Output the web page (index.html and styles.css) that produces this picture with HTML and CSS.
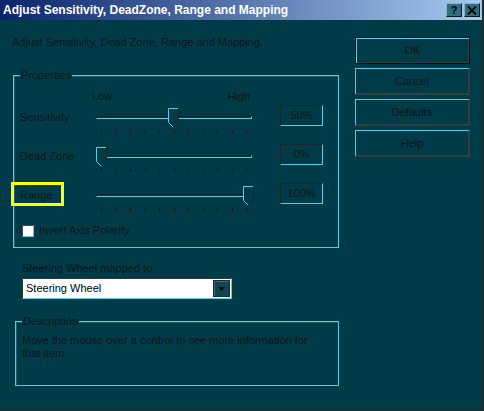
FILE: index.html
```html
<!DOCTYPE html>
<html>
<head>
<meta charset="utf-8">
<link rel="stylesheet" href="styles.css">
</head>
<body>
<div class="window">
  <div class="titlebar">
    <span class="title">Adjust Sensitivity, DeadZone, Range and Mapping</span>
    <div class="tb-btns">
      <span class="tb-btn">?</span>
      <span class="tb-btn"><svg width="10" height="9" viewBox="0 0 10 9"><path d="M1 0.5 L9 8.5 M9 0.5 L1 8.5" stroke="#000" stroke-width="2"/></svg></span>
    </div>
  </div>
  <div class="client">
    <div class="main">
      <p class="intro">Adjust Sensitivity, Dead Zone, Range and Mapping.</p>
      <div class="group props">
        <span class="legend">Properties</span>
        <div class="scale"><span>Low</span><span>High</span></div>
        <div class="row">
          <span class="lbl">Sensitivity</span>
          <div class="slider">
            <div class="track"></div>
            <div class="ticks"><i></i><i></i><i></i><i></i><i></i><i></i><i></i><i></i><i></i><i></i><i></i></div>
            <svg class="thumb" style="left:72px" width="11" height="20" viewBox="0 0 11 20"><polygon points="0.5,0.5 10.5,0.5 10.5,14.5 5.5,19.5 0.5,14.5" fill="#003b47"/><path d="M5.5 19.5 L0.5 14.5 L0.5 0.5 L10 0.5" fill="none" stroke="#5ccbe3"/><path d="M10.5 0 L10.5 14.5 L5.5 19.5" fill="none" stroke="#16262a"/></svg>
          </div>
          <span class="val">50%</span>
        </div>
        <div class="row">
          <span class="lbl">Dead Zone</span>
          <div class="slider">
            <div class="track"></div>
            <div class="ticks"><i></i><i></i><i></i><i></i><i></i><i></i><i></i><i></i><i></i><i></i><i></i></div>
            <svg class="thumb" style="left:0px" width="11" height="20" viewBox="0 0 11 20"><polygon points="0.5,0.5 10.5,0.5 10.5,14.5 5.5,19.5 0.5,14.5" fill="#003b47"/><path d="M5.5 19.5 L0.5 14.5 L0.5 0.5 L10 0.5" fill="none" stroke="#5ccbe3"/><path d="M10.5 0 L10.5 14.5 L5.5 19.5" fill="none" stroke="#16262a"/></svg>
          </div>
          <span class="val">0%</span>
        </div>
        <div class="row">
          <span class="lbl"><span class="hl"></span>Range</span>
          <div class="slider">
            <div class="track"></div>
            <div class="ticks"><i></i><i></i><i></i><i></i><i></i><i></i><i></i><i></i><i></i><i></i><i></i></div>
            <svg class="thumb" style="left:147px" width="11" height="20" viewBox="0 0 11 20"><polygon points="0.5,0.5 10.5,0.5 10.5,14.5 5.5,19.5 0.5,14.5" fill="#003b47"/><path d="M5.5 19.5 L0.5 14.5 L0.5 0.5 L10 0.5" fill="none" stroke="#5ccbe3"/><path d="M10.5 0 L10.5 14.5 L5.5 19.5" fill="none" stroke="#16262a"/></svg>
          </div>
          <span class="val">100%</span>
        </div>
        <label class="check"><span class="box"></span>Invert Axis Polarity</label>
      </div>
      <div class="map-label">Steering Wheel mapped to</div>
      <div class="combo">
        <span class="combo-text">Steering Wheel</span>
        <span class="combo-btn"><svg width="7" height="4" viewBox="0 0 7 4"><polygon points="0,0 7,0 3.5,4" fill="#000"/></svg></span>
      </div>
      <div class="group desc">
        <span class="legend">Description</span>
        <p class="desc-text">Move the mouse over a control to see more information for<br>that item.</p>
      </div>
    </div>
    <div class="buttons">
      <div class="btn default"><span>OK</span></div>
      <div class="btn"><span>Cancel</span></div>
      <div class="btn"><span>Defaults</span></div>
      <div class="btn"><span>Help</span></div>
    </div>
  </div>
</div>
</body>
</html>
```
FILE: styles.css
```css
* { box-sizing: border-box; }
body { margin: 0; }
.window {
  width: 484px;
  height: 411px;
  background: #003b47;
  border-right: 2px solid #1e2c2f;
  border-bottom: 2px solid #1e2c2f;
  font-family: "Liberation Sans", Arial, sans-serif;
  font-size: 11px;
  line-height: 13px;
  color: #08171b;
  display: flex;
  flex-direction: column;
  overflow: hidden;
}
.titlebar {
  height: 20px;
  flex: none;
  background: linear-gradient(to right, #0a246a, #a6caf0);
  display: flex;
  align-items: center;
  justify-content: space-between;
  padding: 0 2px 0 3px;
}
.title {
  color: #fff;
  font-weight: bold;
  font-size: 12px;
  font-family: "Liberation Sans", Arial, sans-serif;
}
.tb-btns { display: flex; gap: 2px; }
.tb-btn {
  width: 16px;
  height: 14px;
  background: #2e6f7d;
  border-top: 1px solid #7fb8c6;
  border-left: 1px solid #7fb8c6;
  border-right: 1px solid #0a1417;
  border-bottom: 1px solid #0a1417;
  display: flex;
  align-items: center;
  justify-content: center;
  font-weight: bold;
  font-size: 11px;
  color: #000;
}
.client {
  flex: 1;
  display: flex;
  padding-left: 12px;
}
.main { width: 327px; }
.intro { margin: 16px 0 0; }
.group {
  position: relative;
  border: 1px solid #5ccbe3;
  box-shadow: inset 1px 1px 0 #1f5f6d;
}
.legend {
  position: absolute;
  top: -7px;
  left: 6px;
  padding: 0 1px;
  background: #003b47;
}
.props {
  margin: 26px 0 0 1px;
  width: 326px;
  padding: 14px 0 9px 6px;
}
.scale {
  margin-left: 72px;
  width: 158px;
  display: flex;
  justify-content: space-between;
}
.row {
  display: grid;
  grid-template-columns: 76px 184px 43px;
  height: 39px;
  align-items: start;
}
.scale + .row { margin-top: 2px; }
.lbl { position: relative; margin-top: 6px; }
.hl {
  position: absolute;
  left: -9px;
  top: -7px;
  width: 53px;
  height: 24px;
  border: 3px solid #ffff00;
}
.slider { position: relative; width: 158px; height: 39px; }
.track {
  margin-top: 11px;
  width: 156px;
  height: 3px;
  border-top: 1px solid #16262a;
  border-left: 1px solid #16262a;
  border-bottom: 1px solid #5ccbe3;
  border-right: 1px solid #5ccbe3;
}
.ticks {
  margin: 11px 0 0 5px;
  width: 146px;
  display: flex;
  justify-content: space-between;
}
.ticks i { width: 1px; height: 3px; background: #08171b; }
.thumb { position: absolute; top: 3px; }
.val {
  height: 21px;
  display: flex;
  align-items: center;
  justify-content: center;
  border-top: 1px solid #16282d;
  border-left: 1px solid #16282d;
  border-bottom: 1px solid #5ccbe3;
  border-right: 1px solid #5ccbe3;
}
.check {
  display: flex;
  align-items: center;
  height: 15px;
  margin-top: 1px;
}
.box {
  width: 12px;
  height: 12px;
  margin: 0 5px 0 2px;
  background: #fff;
  border-top: 1px solid #3a4a4e;
  border-left: 1px solid #3a4a4e;
  border-bottom: 1px solid #5ccbe3;
  border-right: 1px solid #5ccbe3;
}
.map-label { margin: 14px 0 0 10px; }
.combo {
  margin: 3px 0 0 10px;
  width: 210px;
  height: 21px;
  display: flex;
  border-top: 1px solid #22363b;
  border-left: 1px solid #22363b;
  border-bottom: 1px solid #5ccbe3;
  border-right: 1px solid #5ccbe3;
  background: #fff;
  padding: 1px;
}
.combo-text {
  flex: 1;
  padding-left: 2px;
  display: flex;
  align-items: center;
  color: #000;
}
.combo-btn {
  width: 17px;
  background: #0f4653;
  border: 1px solid #1c2c30;
  box-shadow: inset 1px 1px 0 #2f6a77;
  display: flex;
  align-items: center;
  justify-content: center;
}
.desc {
  margin: 22px 0 0 3px;
  width: 324px;
  height: 65px;
  padding: 12px 0 0 6px;
}
.desc-text { margin: 0; }
.buttons {
  margin-left: 16px;
  padding-top: 17px;
  display: flex;
  flex-direction: column;
  gap: 4px;
}
.btn {
  width: 115px;
  height: 27px;
  border-top: 1px solid #5ccbe3;
  border-left: 1px solid #5ccbe3;
  border-bottom: 2px solid #2f3f43;
  border-right: 2px solid #2f3f43;
  display: flex;
  align-items: center;
  justify-content: center;
}
.btn.default {
  border: 1px solid #081215;
  box-shadow: inset 1px 1px 0 #5ccbe3, inset -1px -1px 0 #2f3f43;
}
```
